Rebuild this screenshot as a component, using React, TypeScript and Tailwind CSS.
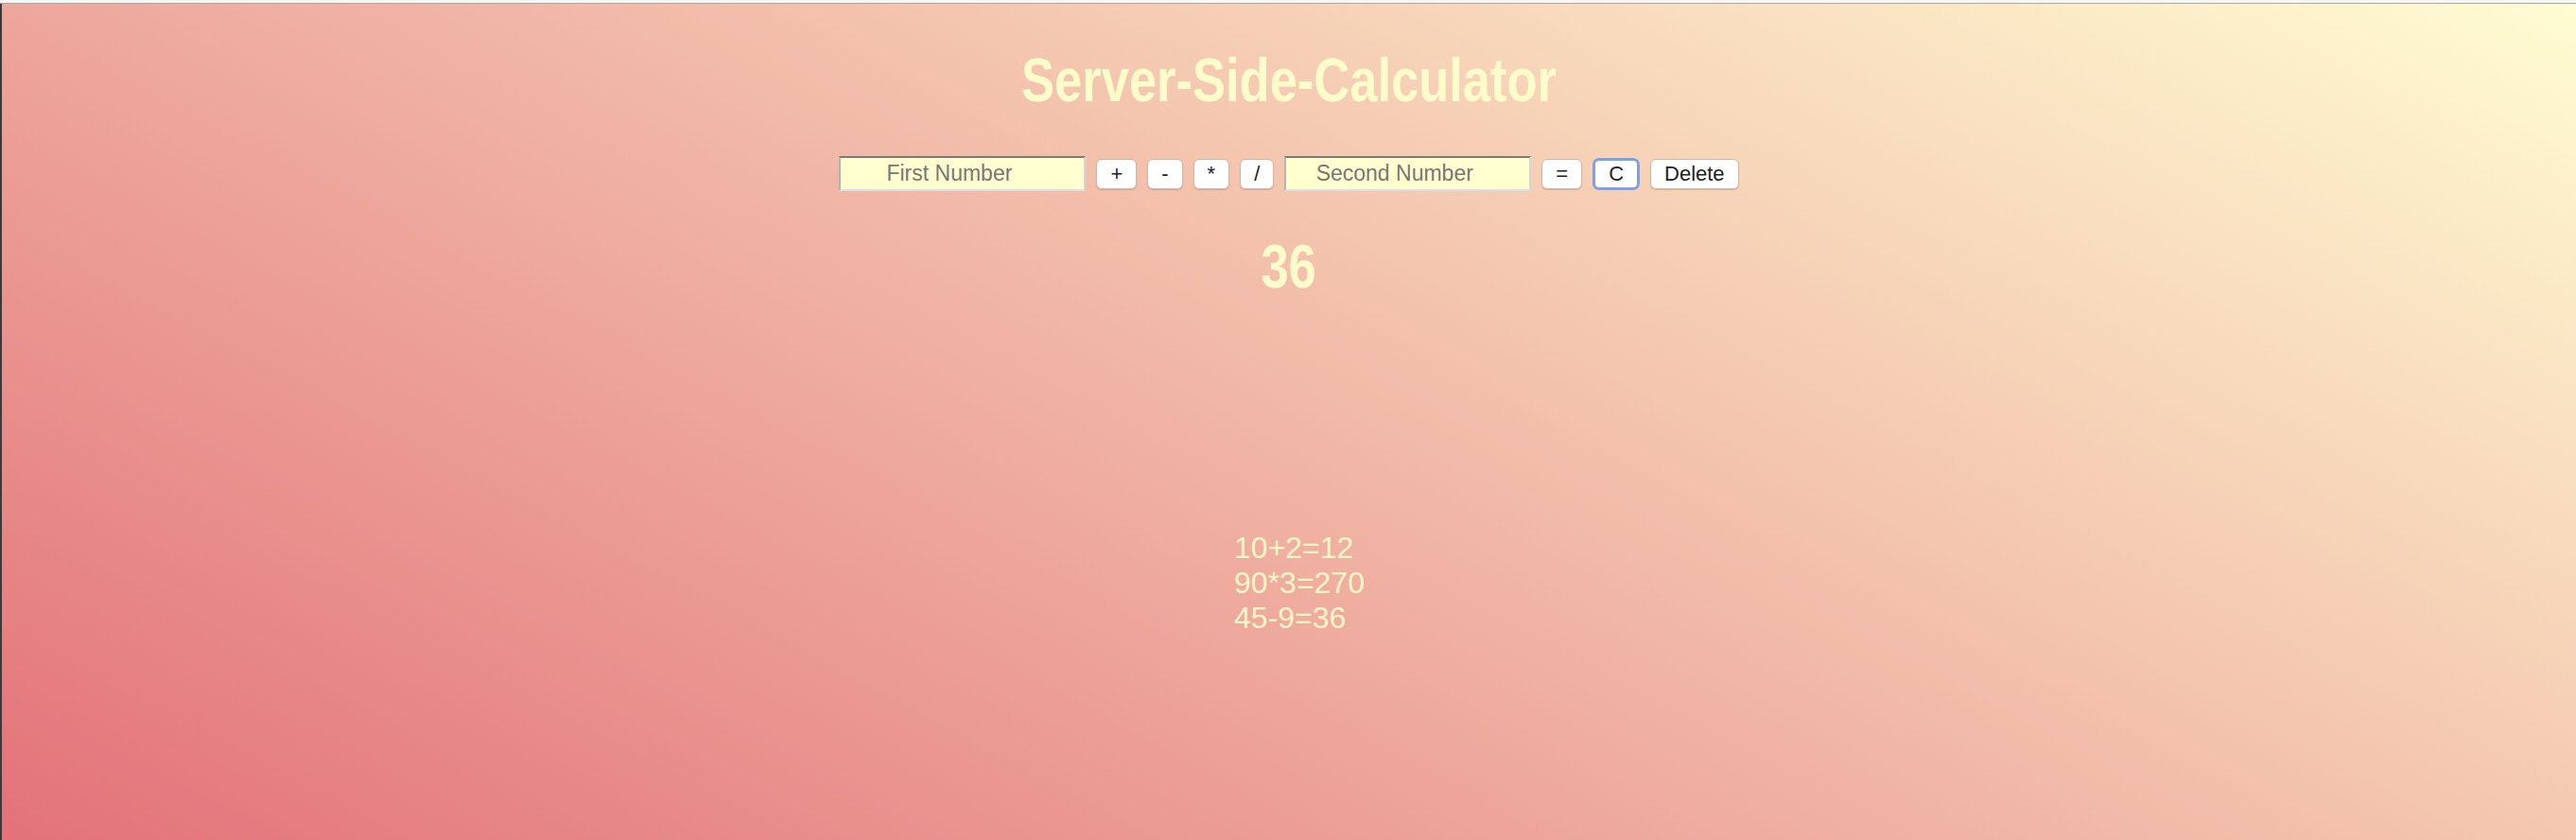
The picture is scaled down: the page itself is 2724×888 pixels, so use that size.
import React, { useState } from 'react';

const history = ['10+2=12', '90*3=270', '45-9=36'];

const opButtons = ['+', '-', '*', '/'];

function OpButton({ label, focused = false }: { label: string; focused?: boolean }) {
  return (
    <button
      className={
        focused
          ? 'h-[34px] px-[14px] rounded-[7px] bg-white text-[22px] leading-none text-[#222] border-[3px] border-[#7ea1e4]'
          : 'h-[32px] px-[14px] rounded-[6px] bg-white text-[22px] leading-none text-[#222] border border-[#d2b6a6] shadow-[0_1px_1px_rgba(120,80,60,0.25)]'
      }
    >
      {label}
    </button>
  );
}

function NumberInput({ placeholder }: { placeholder: string }) {
  return (
    <input
      placeholder={placeholder}
      className="w-[261px] h-[37px] pr-[28px] bg-[#ffffd0] text-center text-[23px] text-[#444] placeholder:text-[#777] border-2 border-t-[#7a7a7a] border-l-[#b4b4b4] border-r-[#d6d6d6] border-b-[#dedede] outline-none"
    />
  );
}

function Narrow({ children }: { children: React.ReactNode }) {
  // no condensed face installed, so squeeze Liberation Sans Bold to Arial Narrow's width
  return <span className="inline-block scale-x-[0.82]">{children}</span>;
}

export default function App() {
  const [result] = useState(36);

  return (
    <div className="w-[2724px] h-[888px] overflow-hidden flex flex-col font-['Liberation_Sans',Arial,sans-serif]">
      <div className="h-[4px] shrink-0 bg-[#f6f6f6] border-b border-[#a9a9a9]" />
      <main className="flex-1 flex flex-col items-center border-l-2 border-[#3a3a3a] bg-[linear-gradient(28deg,#e3727a,#fffcd2)]">
        <h1 className="mt-[49px] text-[64px] leading-none font-bold text-[#fffccc]">
          <Narrow>Server-Side-Calculator</Narrow>
        </h1>

        <div className="mt-[48px] flex items-center gap-[11px]">
          <NumberInput placeholder="First Number" />
          {opButtons.map((op) => (
            <OpButton key={op} label={op} />
          ))}
          <NumberInput placeholder="Second Number" />
          <OpButton label="=" />
          <OpButton label="C" focused />
          <OpButton label="Delete" />
        </div>

        <h2 className="mt-[48px] text-[64px] leading-none font-bold text-[#fffccc]">
          <Narrow>{result}</Narrow>
        </h2>

        <ul className="mt-[247px] pl-[22px] text-[32px] leading-[37px] text-[#fff6c6]">
          {history.map((line) => (
            <li key={line}>{line}</li>
          ))}
        </ul>
      </main>
    </div>
  );
}
